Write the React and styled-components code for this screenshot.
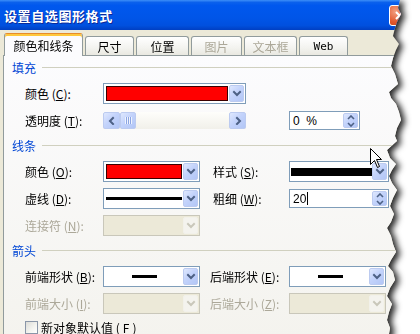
import styled, { createGlobalStyle } from "styled-components";

const GlobalStyle = createGlobalStyle`
  *, *::before, *::after { box-sizing: border-box; }
  html, body { margin: 0; padding: 0; background: #fff; overflow: hidden; }
  body {
    font-family: "Noto Sans CJK SC", "Liberation Sans", sans-serif;
    font-size: 12px;
    color: #000;
  }
`;

const tear = [
  "0 0", "400px 0", "398px 8px", "401px 14px", "397px 22px", "395px 28px",
  "393px 36px", "399px 44px", "396px 50px", "393px 58px", "391px 66px",
  "395px 74px", "398px 84px", "389px 92px", "391px 98px", "396px 104px",
  "399px 112px", "401px 120px", "397px 128px", "395px 136px", "397px 141px",
  "387px 150px", "390px 158px", "396px 164px", "392px 170px", "389px 176px",
  "392px 183px", "397px 190px", "393px 198px", "390px 206px", "394px 214px",
  "391px 222px", "387px 228px", "391px 236px", "393px 244px", "396px 252px",
  "391px 260px", "388px 266px", "393px 272px", "395px 280px", "390px 288px",
  "387px 296px", "392px 304px", "389px 312px", "387px 320px", "390px 328px",
  "388px 340px", "0 340px",
].join(", ");

const Stage = styled.div`
  position: relative;
  width: 420px;
  height: 334px;
  overflow: hidden;
  background: #fff;
`;

const ShadowWrap = styled.div`
  width: 412px;
  height: 340px;
  filter: drop-shadow(4px 2px 3px rgba(0, 0, 0, 0.85));
`;

const Dialog = styled.div`
  width: 412px;
  height: 340px;
  display: flex;
  flex-direction: column;
  background: #ece9d8;
  clip-path: polygon(${tear});
`;

const TitleBar = styled.div`
  flex: none;
  height: 30px;
  display: flex;
  align-items: center;
  padding: 0 2px 0 4px;
  background: linear-gradient(
    to bottom,
    #3d8ff8 0%,
    #0b61ec 8%,
    #0058ee 18%,
    #0055e8 60%,
    #0050de 85%,
    #003fc2 100%
  );
`;

const Title = styled.div`
  color: #fff;
  font-weight: bold;
  font-size: 13px;
  letter-spacing: 0.6px;
  text-shadow: 1px 1px 0 #0a2a9a;
`;

const CloseButton = styled.div`
  margin-left: auto;
  width: 21px;
  height: 21px;
  border: 1px solid #fff;
  border-radius: 3px;
  background: radial-gradient(circle at 30% 30%, #f2a184 0%, #e2582d 55%, #c23c13 100%);
  display: flex;
  align-items: center;
  justify-content: center;
`;

const TabStrip = styled.div`
  flex: none;
  height: 25px;
  display: flex;
  align-items: flex-end;
  padding-left: 4px;
`;

const Tab = styled.div`
  position: relative;
  z-index: ${(p) => (p.$active ? 1 : 0)};
  width: ${(p) => p.$w}px;
  height: ${(p) => (p.$active ? 23 : 19)}px;
  margin-left: ${(p) => p.$gap}px;
  margin-bottom: ${(p) => (p.$active ? -1 : 0)}px;
  display: flex;
  align-items: center;
  justify-content: center;
  padding-top: ${(p) => (p.$active ? 1 : 0)}px;
  border: 1px solid #919b9c;
  border-bottom: none;
  border-top-color: ${(p) => (p.$active ? "#e68b2c" : "#919b9c")};
  border-radius: 3px 3px 0 0;
  box-shadow: ${(p) => (p.$active ? "inset 0 2px 0 #ffc83c" : "none")};
  background: ${(p) =>
    p.$active ? "#fcfcfe" : "linear-gradient(to bottom, #ffffff, #f3f3ef 60%, #e9e8e1)"};
  color: ${(p) => (p.$disabled ? "#aca899" : "#000")};
  font-family: ${(p) =>
    p.$mono ? '"DejaVu Sans Mono", "Liberation Mono", monospace' : "inherit"};
  font-size: ${(p) => (p.$mono ? 11 : 12)}px;
`;

const Panel = styled.div`
  flex: 1;
  margin-left: 3px;
  border: 1px solid #919b9c;
  border-right: none;
  background: linear-gradient(to bottom, #fcfcfe, #f4f3ee);
  padding: 3px 0 0 8px;
  display: flex;
  flex-direction: column;
  gap: 6px;
`;

const SectionHead = styled.div`
  height: 16px;
  display: flex;
  align-items: center;
  color: #0046d5;
  margin-bottom: 2px;

  &::after {
    content: "";
    flex: 1;
    height: 1px;
    margin-left: 6px;
    background: #d0d0bf;
  }
`;

const Row = styled.div`
  height: ${(p) => p.$h || 21}px;
  display: flex;
  align-items: center;
  padding-left: 13px;
`;

const Label = styled.div`
  flex: none;
  width: ${(p) => p.$w}px;
  margin-left: ${(p) => p.$ml || 0}px;
  color: ${(p) => (p.$disabled ? "#aca899" : "#000")};
  white-space: nowrap;
  line-height: 14px;

  u {
    text-decoration-thickness: 1px;
    text-underline-offset: 1px;
  }
`;

const ComboBox = styled.div`
  flex: none;
  width: ${(p) => p.$w}px;
  height: 21px;
  display: flex;
  padding: 1px;
  border: 1px solid ${(p) => (p.$disabled ? "#c9c7ba" : "#7f9db9")};
  background: ${(p) => (p.$disabled ? "#ece9d8" : "#fff")};
`;

const ComboValue = styled.div`
  flex: 1;
  display: flex;
  align-items: center;
  justify-content: ${(p) => (p.$center ? "center" : "flex-start")};
  padding: 0 ${(p) => p.$pad ?? 1}px;
`;

const Swatch = styled.div`
  flex: 1;
  height: 15px;
  background: #ff0000;
  border: 1px solid #3a0000;
`;

const LineSample = styled.div`
  width: ${(p) => (p.$w ? `${p.$w}px` : "100%")};
  height: ${(p) => p.$h}px;
  background: #000;
`;

const XPButton = styled.div`
  flex: none;
  width: ${(p) => p.$w || 15}px;
  display: flex;
  flex-direction: column;
  align-items: center;
  justify-content: center;
  border: 1px solid ${(p) => (p.$disabled ? "#f2f1ea" : "#bccbf0")};
  border-radius: 2px;
  background: ${(p) =>
    p.$disabled
      ? "#f4f3ee"
      : "linear-gradient(135deg, #dfe8fe 0%, #c3d3fb 45%, #b2c6f6 100%)"};
`;

const TextField = styled.div`
  flex: none;
  width: ${(p) => p.$w}px;
  height: ${(p) => p.$h || 21}px;
  margin-left: ${(p) => p.$ml || 0}px;
  display: flex;
  padding: 1px;
  border: 1px solid #7f9db9;
  background: #fff;
`;

const FieldText = styled.div`
  flex: 1;
  display: flex;
  align-items: center;
  padding-left: 2px;
  font-family: "Liberation Sans", "Noto Sans CJK SC", sans-serif;
  font-size: 12px;
  white-space: pre;
`;

const Caret = styled.span`
  display: inline-block;
  width: 1px;
  height: 13px;
  margin-left: 1px;
  background: #000;
`;

const ScrollBar = styled.div`
  flex: none;
  width: ${(p) => p.$w}px;
  height: 17px;
  display: flex;
  background: linear-gradient(to bottom, #fefefb, #f1f0ea);
`;

const ScrollTrack = styled.div`
  flex: 1;
`;

const Grip = styled.div`
  width: 7px;
  height: 7px;
  background: repeating-linear-gradient(
    to right,
    #eef3fe 0 1px,
    #8ca5e2 1px 2px
  );
`;

const CheckRow = styled.label`
  height: 14px;
  display: flex;
  align-items: center;
  gap: 3px;
  padding-left: 13px;
`;

const CheckBox = styled.span`
  width: 13px;
  height: 13px;
  border: 1px solid #8a96a8;
  background: linear-gradient(135deg, #dcdcd7 0%, #f4f4f0 60%, #fff 100%);
`;

const Pointer = styled.svg`
  position: absolute;
  left: 370px;
  top: 148px;
`;

const Chevron = ({ dir = "down", disabled }) => {
  const c = disabled ? "#c9c7ba" : "#4d6185";
  const paths = {
    down: "M2 3 L5 6 L8 3",
    up: "M2 6 L5 3 L8 6",
    left: "M6 2 L3 5 L6 8",
    right: "M4 2 L7 5 L4 8",
  };
  return (
    <svg width="10" height="9" viewBox="0 0 10 9">
      <path d={paths[dir]} fill="none" stroke={c} strokeWidth="2" strokeLinecap="square" />
    </svg>
  );
};

const SmallChevron = ({ dir }) => (
  <svg width="8" height="5" viewBox="0 0 8 5">
    <path
      d={dir === "up" ? "M1 4 L4 1 L7 4" : "M1 1 L4 4 L7 1"}
      fill="none"
      stroke="#4d6185"
      strokeWidth="1.6"
    />
  </svg>
);

const Combo = ({ w, disabled, children, center, pad }) => (
  <ComboBox $w={w} $disabled={disabled}>
    <ComboValue $center={center} $pad={pad}>{children}</ComboValue>
    <XPButton $disabled={disabled}>
      <Chevron disabled={disabled} />
    </XPButton>
  </ComboBox>
);

const Spin = ({ w, ml, children }) => (
  <TextField $w={w} $ml={ml} $h={19}>
    <FieldText>{children}</FieldText>
    <XPButton>
      <SmallChevron dir="up" />
      <div style={{ height: 2 }} />
      <SmallChevron dir="down" />
    </XPButton>
  </TextField>
);

const tabs = [
  { label: "颜色和线条", w: 79, gap: 0, active: true },
  { label: "尺寸", w: 49, gap: 2 },
  { label: "位置", w: 53, gap: 2 },
  { label: "图片", w: 51, gap: 2, disabled: true },
  { label: "文本框", w: 53, gap: 2, disabled: true },
  { label: "Web", w: 49, gap: 2, mono: true },
];

export default function App() {
  return (
    <>
      <GlobalStyle />
      <Stage>
        <ShadowWrap>
          <Dialog>
            <TitleBar>
              <Title>设置自选图形格式</Title>
              <CloseButton>
                <svg width="11" height="11" viewBox="0 0 11 11">
                  <path d="M2 2 L9 9 M9 2 L2 9" stroke="#fff" strokeWidth="2" />
                </svg>
              </CloseButton>
            </TitleBar>

            <TabStrip>
              {tabs.map((t) => (
                <Tab
                  key={t.label}
                  $w={t.w}
                  $gap={t.gap}
                  $active={t.active}
                  $disabled={t.disabled}
                  $mono={t.mono}
                >
                  {t.label}
                </Tab>
              ))}
            </TabStrip>

            <Panel>
              <SectionHead>填充</SectionHead>
              <Row>
                <Label $w={78}>颜色 (<u>C</u>):</Label>
                <Combo w={143} pad={1}>
                  <Swatch />
                </Combo>
              </Row>
              <Row>
                <Label $w={78}>透明度 (<u>T</u>):</Label>
                <ScrollBar $w={143}>
                  <XPButton $w={17}>
                    <Chevron dir="left" />
                  </XPButton>
                  <XPButton $w={16}>
                    <Grip />
                  </XPButton>
                  <ScrollTrack />
                  <XPButton $w={17}>
                    <Chevron dir="right" />
                  </XPButton>
                </ScrollBar>
                <Spin w={71} ml={43}>0  %</Spin>
              </Row>

              <SectionHead>线条</SectionHead>
              <Row>
                <Label $w={78}>颜色 (<u>O</u>):</Label>
                <Combo w={97} pad={1}>
                  <Swatch />
                </Combo>
                <Label $w={76} $ml={13}>样式 (<u>S</u>):</Label>
                <Combo w={100} pad={0}>
                  <LineSample $h={8} />
                </Combo>
              </Row>
              <Row>
                <Label $w={78}>虚线 (<u>D</u>):</Label>
                <Combo w={97}>
                  <LineSample $h={3} />
                </Combo>
                <Label $w={76} $ml={13}>粗细 (<u>W</u>):</Label>
                <Spin w={100}>
                  20
                  <Caret />
                </Spin>
              </Row>
              <Row>
                <Label $w={78} $disabled>连接符 (<u>N</u>):</Label>
                <Combo w={97} disabled />
              </Row>

              <SectionHead>箭头</SectionHead>
              <Row>
                <Label $w={78}>前端形状 (<u>B</u>):</Label>
                <Combo w={97} center>
                  <LineSample $w={25} $h={3} />
                </Combo>
                <Label $w={79} $ml={10}>后端形状 (<u>E</u>):</Label>
                <Combo w={97} center>
                  <LineSample $w={25} $h={3} />
                </Combo>
              </Row>
              <Row>
                <Label $w={78} $disabled>前端大小 (<u>I</u>):</Label>
                <Combo w={97} disabled />
                <Label $w={79} $ml={10} $disabled>后端大小 (<u>Z</u>):</Label>
                <Combo w={97} disabled />
              </Row>
              <CheckRow>
                <CheckBox />
                新对象默认值 (<u>F</u>)
              </CheckRow>
            </Panel>
          </Dialog>
        </ShadowWrap>

        <Pointer width="13" height="21" viewBox="0 0 13 21">
          <path
            d="M0.5 0.5 L0.5 16.5 L4.5 12.5 L7.5 19.5 L9.5 18.5 L6.5 11.5 L11.5 11.5 Z"
            fill="#fff"
            stroke="#000"
            strokeWidth="1"
          />
        </Pointer>
      </Stage>
    </>
  );
}
